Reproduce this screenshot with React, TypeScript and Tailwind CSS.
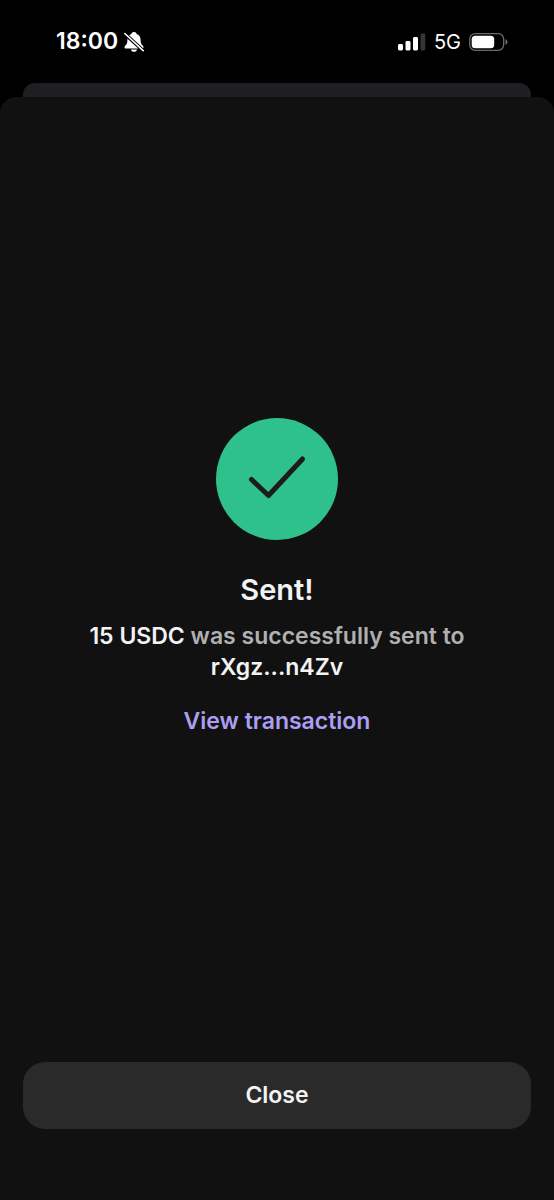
function MutedBellIcon() {
  return (
    <svg viewBox="0 0 20 20" className="size-5" aria-hidden="true">
      <path
        d="M10 0C8.500 0 7.600.9 7.300 1.900 4.700 2.900 3.400 5 3.400 8c0 3-.6 4.100-1.800 5.300-.8.800-1.100 1.300-1.100 1.900 0 .8.600 1.300 1.500 1.300h16c.9 0 1.500-.5 1.500-1.300 0-.6-.3-1.100-1.100-1.900C17.200 12.100 16.600 11 16.600 8c0-3-1.300-5.100-3.900-6.100C12.400.9 11.500 0 10 0Z"
        fill="white"
      />
      <path d="M7 17.400h6c-.2 1.500-1.400 2.400-3 2.400s-2.800-.9-3-2.400Z" fill="white" />
      <path d="M0 1 20 19.400" stroke="black" strokeWidth="3.600" />
      <path d="M.8 1.500 19.200 18.600" stroke="white" strokeWidth="1.600" strokeLinecap="round" />
    </svg>
  );
}

function SignalIcon() {
  return (
    <svg viewBox="0 0 28 18" className="h-[18px] w-7" aria-hidden="true">
      <rect x="0" y="11" width="5" height="6.500" rx="1.400" fill="white" />
      <rect x="7.500" y="8" width="5" height="9.500" rx="1.400" fill="white" />
      <rect x="15" y="4" width="5" height="13.500" rx="1.400" fill="white" />
      <rect x="22.500" y="0.500" width="4.800" height="17" rx="1.400" fill="#353535" />
    </svg>
  );
}

function BatteryIcon() {
  return (
    <svg viewBox="0 0 39 18" className="h-[18px] w-[39px]" aria-hidden="true">
      <rect x="0.700" y="0.700" width="34" height="16.600" rx="5.500" fill="none" stroke="#6b6b6b" strokeWidth="1.300" />
      <rect x="2.700" y="2.700" width="22.500" height="12.600" rx="3.600" fill="white" />
      <path d="M36.500 6.300c1.300.4 2 1.400 2 2.700s-.7 2.300-2 2.700Z" fill="#6b6b6b" />
    </svg>
  );
}

function StatusBar() {
  return (
    <header className="flex h-[83px] shrink-0 items-center justify-between pr-[46px] pl-14 text-white">
      <div className="flex items-center gap-1.5">
        <span className="text-[23px] font-semibold">18:00</span>
        <MutedBellIcon />
      </div>
      <div className="flex items-center gap-2">
        <SignalIcon />
        <span className="text-xl">5G</span>
        <BatteryIcon />
      </div>
    </header>
  );
}

function SuccessBadge() {
  return (
    <svg viewBox="0 0 122 122" className="size-[122px]" role="img" aria-label="Success">
      <circle cx="61" cy="61" r="61" fill="#2fc18c" />
      <path
        d="M35.500 61.500 52.500 77.500 86.500 41"
        fill="none"
        stroke="#1c1c1c"
        strokeWidth="5"
        strokeLinecap="round"
        strokeLinejoin="round"
      />
    </svg>
  );
}

export default function App() {
  return (
    <div className="flex min-h-screen flex-col bg-black font-['Inter',sans-serif]">
      <StatusBar />
      <div className="mx-[23px] h-3.5 shrink-0 rounded-t-xl bg-[#1f1f21]" />
      <main className="flex flex-1 flex-col rounded-t-2xl bg-[#111111] px-[23px] pb-[71px]">
        <section className="flex flex-1 flex-col items-center justify-center text-center">
          <SuccessBadge />
          <h1 className="mt-[30px] text-[29px] leading-10 font-semibold text-[#f3f3f3]">Sent!</h1>
          <p className="mt-[11px] max-w-[400px] text-[23px] leading-[31px] font-semibold text-[#b0b0b0]">
            <span className="text-[#f3f3f3]">15 USDC</span> was successfully sent to{' '}
            <span className="text-[#f3f3f3]">rXgz...n4Zv</span>
          </p>
          <a href="#transaction" className="mt-[18px] text-[23px] leading-10 font-semibold text-[#ab9ff2]">
            View transaction
          </a>
        </section>
        <button
          type="button"
          className="h-[67px] w-full rounded-[22px] bg-[#2a2a2a] text-[23px] font-semibold text-[#f3f3f3]"
        >
          Close
        </button>
      </main>
    </div>
  );
}
